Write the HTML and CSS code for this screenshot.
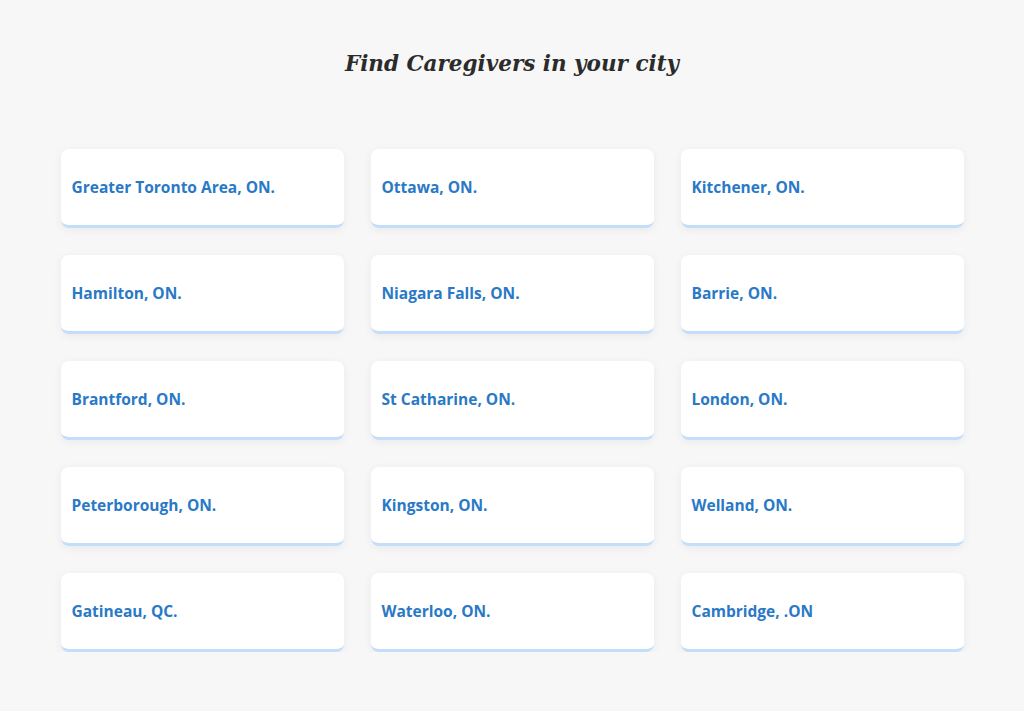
FILE: index.html
```html
<!DOCTYPE html>
<html lang="en">
<head>
    <meta charset="UTF-8">
    <meta name="viewport" content="width=device-width, initial-scale=1.0">
    <title>Find Caregivers in your city</title>
    <link rel="stylesheet" href="styles.css">
</head>
<body>
    <!-- City listing section -->
    <section class="cities">
        <h1>Find Caregivers in your city</h1>
        <div class="city-grid">
            <a class="city-card" href="#">Greater Toronto Area, ON.</a>
            <a class="city-card" href="#">Ottawa, ON.</a>
            <a class="city-card" href="#">Kitchener, ON.</a>
            <a class="city-card" href="#">Hamilton, ON.</a>
            <a class="city-card" href="#">Niagara Falls, ON.</a>
            <a class="city-card" href="#">Barrie, ON.</a>
            <a class="city-card" href="#">Brantford, ON.</a>
            <a class="city-card" href="#">St Catharine, ON.</a>
            <a class="city-card" href="#">London, ON.</a>
            <a class="city-card" href="#">Peterborough, ON.</a>
            <a class="city-card" href="#">Kingston, ON.</a>
            <a class="city-card" href="#">Welland, ON.</a>
            <a class="city-card" href="#">Gatineau, QC.</a>
            <a class="city-card" href="#">Waterloo, ON.</a>
            <a class="city-card" href="#">Cambridge, .ON</a>
        </div>
    </section>
</body>
</html>
```

FILE: styles.css
```css
/* Page background and base font */
body {
    margin: 0;
    background: #f7f7f7;
    font-family: "Open Sans", Arial, sans-serif;
}

/* Section wrapper */
.cities {
    width: 903px;
    margin: 0 auto;
    padding: 45px 0 0;
}

/* Section heading */
.cities h1 {
    margin: 0 0 66px;
    text-align: center;
    font-family: "DejaVu Serif", Georgia, serif;
    font-style: italic;
    font-weight: bold;
    font-size: 21.5px;
    line-height: 38px;
    color: #2b2b2b;
}

/* Grid of city cards */
.city-grid {
    display: grid;
    grid-template-columns: repeat(3, 283px);
    column-gap: 27px;
    row-gap: 27px;
}

/* Single city card */
.city-card {
    display: flex;
    align-items: center;
    height: 76px;
    padding: 0 11px;
    background: #fff;
    border-radius: 8px;
    border-bottom: 3px solid #c2defa;
    box-shadow: 0 2px 10px rgba(0, 0, 0, 0.06);
    color: #2979c6;
    font-weight: bold;
    font-size: 15.5px;
    text-decoration: none;
    box-sizing: content-box;
}
```
